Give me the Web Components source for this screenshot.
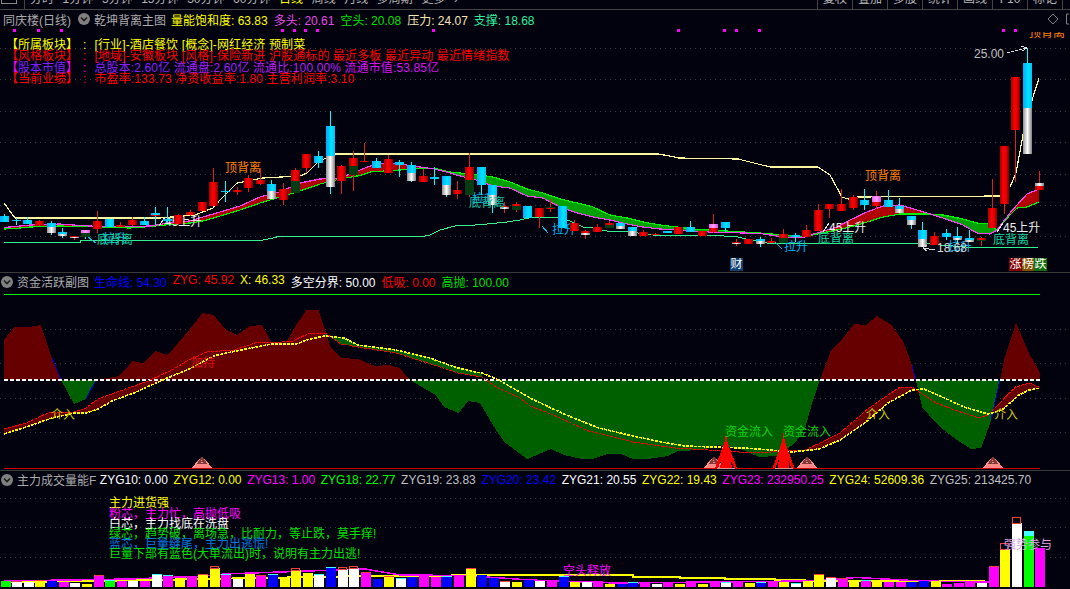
<!DOCTYPE html>
<html lang="zh">
<head>
<meta charset="utf-8">
<title>同庆楼(日线)</title>
<style>
  html, body { margin: 0; height: 100%; background: #02020f; overflow: hidden; }
  body { font: 12px "Liberation Sans", "Noto Sans CJK SC", sans-serif; display: flex; flex-direction: column; }
</style>
</head>
<body>
<top-toolbar></top-toolbar>
<chart-panel h="263" head="18" gap="6" lead="5" pre="同庆楼(日线)" name="乾坤背离主图" items='[["量能饱和度","#ffff00"],["63.83"],["多头","#e84ce8"],["20.61"],["空头","#00e000"],["20.08"],["压力","#f5e6b4"],["24.07"],["支撑","#30f0a0"],["18.68"]]'>
  <k-chart></k-chart>
  <info-rows></info-rows>
  <svg slot="right" width="22" height="12" viewBox="0 0 22 12"><path d="M5 1 L10 6 L5 11 L0 6 Z" fill="none" stroke="#808080"/><path d="M21 1 H18.5 V11 H21" fill="none" stroke="#808080"/></svg>
</chart-panel>
<chart-panel h="198" head="17" gap="6" lead="5" name="资金活跃副图" items='[["生命线","#0000ff"],["54.30"],["ZYG","#ff0000"],["45.92"],["X","#ffff00"],["46.33"],["多空分界","#ffffff"],["50.00"],["低吸","#ff0000"],["0.00"],["高抛","#00e000"],["100.00"]]'>
  <fund-chart></fund-chart>
</chart-panel>
<chart-panel h="118" head="17" gap="5.6" lead="3.5" last name="主力成交量能F" items='[["ZYG10","#ffffff"],["0.00"],["ZYG12","#ffff00"],["0.00"],["ZYG13","#ff00ff"],["1.00"],["ZYG18","#00ff00"],["22.77"],["ZYG19","#c0c0c0"],["23.83"],["ZYG20","#0000ff"],["23.42"],["ZYG21","#ffffff"],["20.55"],["ZYG22","#ffff00"],["19.43"],["ZYG23","#ff00ff"],["232950.25"],["ZYG24","#ffff00"],["52609.36"],["ZYG25","#c0c0c0"],["213425.70"]]'>
  <vol-chart></vol-chart>
</chart-panel>

<script>
const GRID = '#3c3c3c';
const line = (pts, color, w = 1, extra = '') =>
  `<polyline points="${pts.map(p => p.join(',')).join(' ')}" fill="none" stroke="${color}" stroke-width="${w}" ${extra}/>`;
const label = (x, y, str, color, size = 12) =>
  `<text x="${x}" y="${y}" fill="${color}" font-size="${size}">${str}</text>`;
const dots = ys => ys.map(y => `<line x1="0" x2="1070" y1="${y}" y2="${y}" stroke="${GRID}" stroke-dasharray="1 4"/>`).join('');
const poly = (pts, fill) => `<polygon points="${pts.map(p => p.join(',')).join(' ')}" fill="${fill}"/>`;
const rising = (x, y) => line([[x + 6, y - 9], [x, y]], '#f0f0f0') + label(x + 6, y, '45上升', '#f0f0f0');

class TopToolbar extends HTMLElement {
  connectedCallback() {
    const tabs = ['分时', '1分钟', '5分钟', '15分钟', '30分钟', '60分钟', '日线', '周线', '月线', '多周期', '更多', '›'];
    const tools = ['复权', '叠加', '多股', '统计', '画线', 'F10', '标记', ''];
    this.attachShadow({mode: 'open'}).innerHTML = `
      <style>
        :host { display: flex; flex: none; height: 10px; box-sizing: border-box; border-bottom: 1px solid #444; overflow: hidden; color: #b4b4b4; line-height: 12px; }
        .icon { width: 14px; height: 3px; margin: 0 7px 0 1px; border: 1px solid #888; border-top: 0; flex: none; }
        .tabs { display: flex; gap: 8.6px; margin-top: -7px; padding-left: 5px; height: 16px; border-left: 1px solid #444; }
        .tabs .on { color: #ffff00; }
        .tools { display: flex; margin-left: auto; width: 253px; }
        .tools div { width: 35px; flex: none; box-sizing: border-box; border-left: 1px solid #444; text-align: center; }
        .tools span { display: block; margin-top: -7px; }
      </style>
      <div class="icon"></div>
      <div class="tabs">${tabs.map(t => `<span class="${t === '日线' ? 'on' : ''}">${t}</span>`).join('')}</div>
      <div class="tools">${tools.map(t => `<div><span>${t}</span></div>`).join('')}</div>
    `;
  }
}

class ChartPanel extends HTMLElement {
  connectedCallback() {
    const items = JSON.parse(this.getAttribute('items') || '[]');
    const pre = this.getAttribute('pre');
    let pairs = '';
    items.forEach(it => {
      if (it[1]) pairs += `<span style="color:${it[1]}">${it[0]}: `;
      else pairs += `${it[0]}</span>`;
    });
    this.style.height = this.getAttribute('h') + 'px';
    this.attachShadow({mode: 'open'}).innerHTML = `
      <style>
        :host { display: flex; flex: none; flex-direction: column; position: relative; box-sizing: border-box; border-bottom: 1px solid #3a3a3a; }
        :host([last]) { border-bottom: 0; }
        header { display: flex; flex: none; align-items: center; height: ${this.getAttribute('head')}px; padding-left: ${pre ? 3 : 1}px; color: #ababab; white-space: nowrap; }
        .pre { margin-right: 7px; }
        .ic { flex: none; margin-right: 4px; }
        .items { display: flex; gap: ${this.getAttribute('gap')}px; margin-left: ${this.getAttribute('lead')}px; }
        .right { margin-left: auto; display: flex; }
        .body { flex: 1; min-height: 0; }
      </style>
      <header>
        ${pre ? `<span class="pre">${pre}</span>` : ''}
        <svg class="ic" width="12" height="12" viewBox="0 0 12 12"><circle cx="6" cy="6" r="6" fill="#808080"/><path d="M3 4.5 L6 7.5 L9 4.5" fill="none" stroke="#1c1c1c" stroke-width="1.6"/></svg>
        <span>${this.getAttribute('name')}</span>
        <div class="items">${pairs}</div>
        <div class="right"><slot name="right"></slot></div>
      </header>
      <div class="body"><slot></slot></div>
    `;
  }
}

class InfoRows extends HTMLElement {
  connectedCallback() {
    const rows = [
      ['#ffff00', '#ffff00', '<span>[行业]-酒店餐饮 [概念]-网红经济 预制菜</span>', '所属板块', '#ffff00'],
      ['#ff0000', '#ff0000', '<span>[地域]-安徽板块 [风格]-保险新进 沪股通标的 最近多板 最近异动 最近情绪指数</span>', '风格板块', '#ff0000'],
      ['#ff00ff', '#8820ff', '<span style="color:#8820ff">总股本:2.60亿</span> <span style="color:#a020f8">流通盘:2.60亿</span> <span style="color:#b820f0">流通比:100.00%</span> <span style="color:#d810f0">流通市值:53.85亿</span>', '股本市值', '#8020ff'],
      ['#ff0000', '#ff0000', '<span>市盈率:133.73 净资收益率:1.80 主营利润率:3.10</span>', '当前业绩', '#ff0000']
    ];
    this.attachShadow({mode: 'open'}).innerHTML = `
      <style>
        :host { position: absolute; left: 6px; top: 29.5px; display: grid; grid-template-columns: 72px 16.5px auto; grid-auto-rows: 11.5px; line-height: 11.5px; white-space: nowrap; justify-content: start; }
        .c { padding-left: 5px; }
        .v { letter-spacing: .12px; }
      </style>
      ${rows.map(r => `
        <span style="color:${r[0]}">【<span style="color:${r[4]}">${r[3]}</span>】</span>
        <span class="c" style="color:${r[0]}">:</span>
        <span class="v" style="color:${r[1]}">${r[2]}</span>
      `).join('')}
    `;
  }
}

// top, split, bottom, wick top, wick bottom, kind
const CANDLES = [
  [216,0,222,214,222,'c'],[220,0,221,218,225,'c'],[220,0,224,217,224,'cw'],[221,0,225,220,226,'r'],[223,227,233,221,235,'cw'],
  [232,234,236,228,238,'cw'],[236,237,238,236,240,'rw'],[230,233,237,230,239,'pg'],[221,0,229,211,233,'r'],[219,0,227,219,227,'c'],
  [225,0,227,222,227,'r'],[220,0,225,217,226,'r'],[221,0,225,217,225,'c'],[213,215,216,207,225,'cr'],[219,0,221,207,223,'c'],
  [215,0,224,214,225,'r'],[212,0,215,210,216,'r'],[202,0,211,202,211,'r'],[182,0,206,168,206,'r'],[191,0,192,181,202,'c'],
  [190,0,192,187,195,'r'],[178,0,188,175,192,'r'],[180,0,184,168,185,'r'],[184,191,199,180,199,'cw'],[189,0,200,183,205,'r'],
  [170,181,193,168,193,'rg'],[154,0,168,154,173,'r'],[156,0,163,151,168,'c'],[126,156,187,111,194,'cw'],[166,0,181,165,194,'r'],
  [158,166,175,151,191,'rg'],
  [161,0,162,143,162,'r'],[161,168,168,158,168,'cw'],[159,0,173,155,173,'r'],[162,0,165,160,177,'c'],[165,173,181,162,182,'cw'],
  [176,0,182,169,182,'r'],[177,0,179,167,185,'c'],[176,185,195,176,197,'cw'],[190,0,194,181,199,'r'],[167,180,195,153,197,'rg'],
  [167,0,185,167,195,'c'],[185,195,205,185,213,'cw'],[206,207,209,202,213,'rw'],[204,206,210,202,212,'rg'],[206,0,218,206,218,'c'],
  [208,0,217,208,228,'r'],[207,208,209,199,212,'gr'],[206,0,228,206,228,'c'],[223,0,231,220,231,'r'],[231,233,235,230,239,'rw'],
  [227,0,232,224,232,'r'],[223,225,228,221,228,'rg'],[223,226,229,223,229,'cw'],[227,231,236,227,236,'cw'],[232,0,236,230,236,'r'],
  [234,0,235,233,235,'r'],[231,0,233,231,233,'c'],[227,0,234,227,234,'r'],[227,0,232,221,232,'c'],[231,0,236,231,236,'r'],
  [224,228,232,214,233,'pr'],[222,0,228,222,232,'c'],[242,243,244,239,246,'rw'],[239,0,244,239,244,'r'],[239,241,244,237,247,'cw'],
  [241,0,243,238,243,'r'],[234,238,243,229,243,'rg'],[235,0,237,233,242,'c'],[230,0,237,225,237,'r'],[210,0,231,204,231,'r'],
  [204,0,209,204,218,'r'],[204,0,211,189,211,'r'],[197,0,208,195,210,'r'],[200,0,205,189,210,'c'],[196,202,206,191,209,'pr'],
  [200,0,207,190,207,'c'],[206,209,213,198,213,'cw'],[216,220,225,216,229,'cw'],[230,239,247,222,247,'cw'],[236,0,245,232,245,'r'],
  [233,0,237,229,240,'c'],[236,238,240,227,244,'cw'],[238,240,242,230,242,'cw'],[238,240,241,237,246,'rg'],[208,0,228,179,228,'r'],
  [146,0,204,146,214,'r'],[77,0,130,77,182,'r'],[63,108,154,48,154,'cw'],[183,186,190,171,190,'wr']
];
const cx = i => 4.5 + 11.625 * i;

// band top (magenta) and band bottom (green) lines
const BAND = [[4,227.5,229],[15,226.5,228.5],[30,225,227],[60,224,226],[80,225.5,226.6],[100,226.5,227],[130,226.5,228],[150,226,226.5],[175,222,224],[190,221,223],[203,217,221],[220,212,216],[240,206,210],[260,197,203],[280,192,197],[300,183,191],[320,179,184],[340,178,179],[360,170,175.5],[370,166,172],[385,163,171],[400,164,170],[420,167,168],[435,169,168.5],[450,173,172],[460,176,173],[480,181,175],[493,186,177],[510,188,182],[527,196,189],[543,198,193],[560,207,199],[577,213,203],[593,217,207],[610,220,215],[627,224,218],[643,227,222],[660,229,225],[677,230,227],[693,231,229],[710,232,230],[743,233,232],[760,233.5,233],[783,237,235],[803,237.5,237],[817,233,234],[837,227,230],[850,220,227],[867,212,222],[883,206,217],[900,205,214],[917,210,214],[927,213,214],[943,218,215],[963,225,219],[977,233,223],[990,234,224],[997,230,230],[1010,213,215],[1017,205,208],[1027,194,207],[1039,189,202]];

class KChart extends HTMLElement {
  candle(c, i) {
    const [top, split, bot, wt, wb, k] = c;
    const x = Math.round(cx(i) - 4.5);
    const mid = x + 4;
    const fills = { r: 'url(#r)', c: 'url(#c)', w: 'url(#w)', g: '#063c12', p: 'url(#p)' };
    const wick = (k[0] === 'c' || (k[0] === 'p' && k[1] === 'g')) ? '#00ffff' : '#e02020';
    let out = `<rect x="${mid}" y="${wt}" width="1" height="${wb - wt}" fill="${wick}"/>`;
    if (split) {
      out += `<rect x="${x}" y="${top}" width="9" height="${split - top}" fill="${fills[k[0]]}"/>`;
      out += `<rect x="${x}" y="${split}" width="9" height="${bot - split}" fill="${fills[k[1]]}"/>`;
    } else {
      out += `<rect x="${x}" y="${top}" width="9" height="${bot - top}" fill="${fills[k[0]]}"/>`;
    }
    return out;
  }
  band() {
    let out = '';
    for (let i = 0; i < BAND.length - 1; i++) {
      const [x1, m1, g1] = BAND[i], [x2, m2, g2] = BAND[i + 1];
      const up = (m1 + m2) <= (g1 + g2);
      out += poly([[x1, m1], [x2, m2], [x2, g2], [x1, g1]], up ? '#b00000' : '#00a000');
    }
    out += line(BAND.map(b => [b[0], b[2]]), '#00f000', 1.2);
    out += line(BAND.map(b => [b[0], b[1]]), '#f040f0', 1.2);
    return out;
  }
  connectedCallback() {
    const yellow = [[4,203],[15,218],[160,218],[195,215],[213,208],[220,200],[237,183],[263,178],[300,176],[307,173],[317,163],[333,154],[658,154],[670,156],[678,158],[738,159],[770,167],[818,167],[830,175],[842,197],[848,199],[858,197],[1000,196]];
    const yellow2 = [[1010,187],[1016,173],[1023,135],[1033,97],[1039,78]];
    const support = [[4,242],[80,242],[80,241],[97,240],[263,240],[273,238],[280,236],[425,236],[430,235],[440,230],[455,226],[475,225],[487,224],[507,222],[520,220],[533,217],[557,217],[570,221],[583,227],[593,228],[607,231],[627,231],[643,234],[653,235],[710,235],[738,237],[750,240],[767,243],[923,243],[940,245],[966,247],[1038,247]];
    const marks = [14, 38, 61, 282, 294, 305, 317, 433, 678, 724, 736, 759, 1003, 1015];
    const CH = 28;
    this.attachShadow({mode: 'open'}).innerHTML = `
      <style>
        :host { display: block; height: 100%; }
        svg { display: block; width: 100%; height: 100%; shape-rendering: crispEdges; font-family: "Liberation Sans", "Noto Sans CJK SC", sans-serif; }
      </style>
      <svg viewBox="0 ${CH} 1070 244" preserveAspectRatio="none">
        <defs>
          <linearGradient id="r"><stop offset="0" stop-color="#a80000"/><stop offset=".4" stop-color="#ff0000"/><stop offset=".7" stop-color="#e00000"/><stop offset="1" stop-color="#800000"/></linearGradient>
          <linearGradient id="c"><stop offset="0" stop-color="#00a8ff"/><stop offset=".6" stop-color="#00e4ff"/><stop offset="1" stop-color="#00c0ff"/></linearGradient>
          <linearGradient id="w"><stop offset="0" stop-color="#909090"/><stop offset=".5" stop-color="#ffffff"/><stop offset="1" stop-color="#808080"/></linearGradient>
          <linearGradient id="p"><stop offset="0" stop-color="#f060f0"/><stop offset=".5" stop-color="#ffa0ff"/><stop offset="1" stop-color="#e050e0"/></linearGradient>
        </defs>
        ${dots([48, 79, 111, 142, 174, 205, 236])}
        ${label(1029, 37, '顶背离', '#ff8000')}
        <rect x="1020" y="${CH}" width="50" height="4" fill="#02020f"/>
        ${marks.map(x => `<rect x="${x - 1}" y="29" width="3" height="3" fill="#ff00ff"/>`).join('')}
        ${line(support, '#30f090')}
        ${this.band()}
        ${rising(159, 226)}
        ${line(yellow, '#fdf8a0', 1.2)}
        ${line(yellow2, '#fdf8a0', 1.2)}
        ${label(103, 243, '拉升', '#00b8f0')}
        ${label(472, 203, '拉升', '#00b8f0')}
        ${rising(823, 232)}
        ${rising(997, 232)}
        ${label(552, 234, '拉升', '#00b8f0')}
        ${label(784, 251, '拉升', '#00b8f0')}
        ${label(948, 251, '拉升', '#00b8f0')}
        ${CANDLES.map((c, i) => this.candle(c, i)).join('')}
        ${label(225, 172, '顶背离', '#ff8000')}
        ${label(865, 180, '顶背离', '#ff8000')}
        ${label(97, 244, '底背离', '#10d8a0')}
        ${label(469, 207, '底背离', '#10c8a8')}
        ${label(818, 243, '底背离', '#10d8a0')}
        ${label(993, 244, '底背离', '#10d8a0')}
        ${line([[88,237],[96,243]], '#00c0e0')}
        ${line([[542,226],[548,233]], '#00c0e0')}
        ${line([[775,242],[782,249]], '#00c0e0')}
        ${line([[923,248],[935,250]], '#d8d8d8')}
        ${line([[927,245],[923,248],[927,251]], '#d8d8d8')}
        ${label(937, 252, '18.68', '#d8d8d8')}
        ${label(974, 58, '25.00', '#c0c0c0')}
        ${line([[1007,53],[1027,48]], '#e0e0e0', 1, 'stroke-dasharray="3 1"')}
        ${line([[1021,46],[1027,48],[1022,51]], '#e0e0e0')}
      </svg>
      <tag-badge style="left:730px;top:248px;background:#104070">财</tag-badge>
      <tag-badge style="left:1009px;top:248px;background:#800000">涨</tag-badge>
      <tag-badge style="left:1021.5px;top:248px;background:#804f00">榜</tag-badge>
      <tag-badge style="left:1034px;top:248px;background:#107010">跌</tag-badge>
    `;
  }
}

class TagBadge extends HTMLElement {
  connectedCallback() {
    this.attachShadow({mode: 'open'}).innerHTML = `
      <style>:host { position: absolute; width: 13px; height: 13px; line-height: 13px; color: #fff; text-align: center; overflow: hidden; }</style>
      <slot></slot>
    `;
  }
}

class FundChart extends HTMLElement {
  connectedCallback() {
    const area = [[4,380],[4,340],[14,327],[29,327],[41,325],[52,358],[61,380],[74,404],[86,399],[96.4,380],[119,376],[132.6,361],[143,363],[155,351],[168,355],[189,330],[202.5,313],[213.5,315],[225.5,329],[237,335],[250,326],[262,325],[272,343],[286,343],[296,325],[306.5,310],[318.5,310],[330.6,347],[341,358],[358,359],[375,366],[389,365],[399.5,368],[410,380],[435.6,395],[444,407],[458.7,413],[468,401],[480,403],[496,430],[504.5,442],[527,459],[530,458],[551,449],[564,455],[582,459],[592,459],[607.5,454],[621,454],[633,459],[647,459],[668,456],[678,451],[702,450],[719,445],[743.5,450],[759,457],[778,456],[795,443],[805.5,427],[812,403],[820,380],[831,350],[843,338],[854,324],[866,325],[877,316],[891.6,325],[903.6,342],[912,365],[915.7,380],[922.6,408],[940,427],[957,440],[971,449],[981,448],[991.4,420],[1000,380],[1004.5,358],[1016,323],[1029,353],[1039.6,372],[1039.6,380]];
    const yel = [[4,434],[26,427],[52,418],[74,413],[86,413],[98,409],[114,400],[134,393],[151.5,385],[165,379],[189,369],[213.5,356],[231,352],[251,348],[272,344],[296,344],[310,339],[325,336],[344,338],[358,345],[396,350],[430,358],[454.5,367],[475,372],[482,373],[499,380],[530,398],[551,408],[571,417],[599,428],[633,436],[661,442],[685,446],[712.5,447],[743.5,448],[771,450],[792,452],[819,449],[840,440],[866,422],[888,403],[912,390],[924,389],[940,396],[964,407],[988,414],[1002,410],[1019,395],[1029,390],[1039.6,388]];
    const red = [[4,429],[26,423],[48,413],[74,412],[86,408],[98,399],[117,392],[148,381],[172,370],[189,360],[206.6,352],[234,350],[258,342],[272,343],[293,341],[310,333],[325,333],[341,344],[358,347],[396,353],[434,365],[458,373],[482,377],[496,387],[520,398],[530,406],[551,414],[588.5,431],[633,442],[675,448],[709,450],[754,453],[805.5,450],[840,433],[869,408],[900,387],[912,387],[936,403],[960.5,412],[979,418],[988,415],[1015.5,387],[1029,383],[1039.6,387]];

    // split the histogram into one polygon per side of the 380 axis
    let shapes = '', cur = [];
    area.forEach(p => {
      cur.push(p);
      if (p[1] === 380 && cur.length > 1) {
        const up = cur.some(q => q[1] < 380);
        shapes += poly(cur, up ? '#660000' : '#006000');
        cur = [p];
      }
    });

    const between = (a, b, fill) => poly([...red.filter(p => p[0] >= a && p[0] <= b), ...yel.filter(p => p[0] >= a && p[0] <= b).reverse()], fill);
    const pyramid = x => poly([[x,456],[x + 10.5,468],[x - 10.5,468]], '#ff8a8a') +
      [0, 1, 2].map(k => `<path d="M${x} ${457 + k * 2} L${x + 4 - k} ${463} H${x - 4 + k} Z" fill="none" stroke="#803838"/>`).join('');
    const spike = x => poly([[x,433],[x + 6,468],[x - 6,468]], '#ff0000') +
      poly([[x,438],[x + 11,468],[x + 8,468],[x,448],[x - 8,468],[x - 11,468]], '#ff0000') +
      `<rect x="${x - 9}" y="468" width="18" height="1" fill="#e09090"/>`;

    this.attachShadow({mode: 'open'}).innerHTML = `
      <style>
        :host { display: block; height: 100%; }
        svg { display: block; width: 100%; height: 100%; shape-rendering: crispEdges; font-family: "Liberation Sans", "Noto Sans CJK SC", sans-serif; }
      </style>
      <svg viewBox="0 290 1070 180" preserveAspectRatio="none">
        ${dots([329, 363, 398, 432])}
        ${shapes}
        ${between(4, 325, '#660000')}
        ${between(325, 482, '#006000')}
        ${between(792, 912, '#660000')}
        ${between(988, 1040, '#660000')}
        ${line([[52,358],[61,380]], '#0000c0')}${line([[86,399],[96,380]], '#0000c0')}${line([[912,365],[916,380]], '#0000c0')}${line([[991,420],[1000,380]], '#0000c0')}
        <rect x="4" y="294" width="1036" height="1" fill="#00f000"/>
        <line x1="4" x2="1040" y1="380" y2="380" stroke="#ffffff" stroke-width="1.6" stroke-dasharray="4 2"/>
        ${line(red, '#ff0000', 1, 'stroke-dasharray="3 1"')}
        ${line(yel, '#ffff00', 1.6, 'stroke-dasharray="3 1"')}
        <rect x="4" y="468" width="1036" height="1" fill="#d00000"/>
        ${pyramid(202)}${pyramid(714)}${pyramid(807)}${pyramid(993)}
        ${spike(726)}${spike(783.5)}
        ${label(51, 419, '介入', '#c8c800')}
        ${label(191, 367, '加持', '#d81010')}
        ${label(866, 419, '介入', '#c8c800')}
        ${label(994, 419, '介入', '#c8c800')}
        ${label(725, 436, '资金流入', '#10d010')}
        ${label(783, 436, '资金流入', '#10d010')}
      </svg>
    `;
  }
}

class VolChart extends HTMLElement {
  connectedCallback() {
    const M = '#ff00ff', Y = '#ffff00', W = '#ffffff', B = '#0000ff', G = '#00ff00';
    // colour, top in zoomed rows, cap: r red outline, c cyan
    const bars = [[G,340],[W,342,'r'],[W,342],[Y,340,'r'],[B,340],[M,342],[W,345],[Y,347],[M,323,'r'],[G,338,'c'],[M,338],[W,340],[M,338],[W,320,'c'],[M,325,'c'],[Y,330],[M,325],[Y,322,'r'],[Y,300,'R'],[M,322,'c'],[W,333],[Y,318],[M,325,'r'],[B,322,'c'],[Y,328],[Y,306,'R'],[Y,315],[W,320,'c'],[B,300,'c'],[W,303,'R'],[W,300,'R'],[M,316,'r'],[B,333],[Y,328,'r'],[W,332,'c'],[B,328],[M,325],[M,326],[B,326,'c'],[M,322],[Y,303,'r'],[B,320],[B,330],[W,342,'r'],[Y,342],[B,336],
      [W,340],[M,338],[B,328,'c'],[Y,342],[W,342],[M,338],[Y,348],[B,348],[B,345,'c'],[M,345],[W,348],[M,345],[Y,348],[M,346],[Y,348],[M,342],[W,344,'c'],[M,340],[Y,345],[B,345,'c'],[M,340],[Y,342],[W,347,'c'],[Y,340],[Y,320,'r'],[W,330,'r'],[M,333,'r'],[Y,338],[M,338,'c'],[Y,338],[M,342],[M,342],[B,342],[B,340],[Y,340],[M,347],[M,345],[M,342],[W,345],[M,298,'r'],[Y,243,'R'],[W,165,'R'],[G,205,'C'],[M,240]];
    const yLine = [[4,582],[92,581],[372,576],[530,575],[633,575],[633,577],[680,577],[680,578],[725,578],[725,579],[775,579],[775,580],[805,580],[805,581],[985,581]];
    const mLine = [[4,581],[130,579],[205,576],[224,574],[365,569],[400,575],[465,575.5],[530,580],[616,583],[805,581],[857,577.5],[922,581],[990,582]];
    const bar = (b, i) => {
      const x = Math.round(0.5 + 11.625 * i);
      const top = 468 + b[1] / 3;
      let s = `<rect x="${x}" y="${top}" width="10" height="${587 - top}" fill="${b[0]}"/>`;
      if (b[2] === 'r') s += `<rect x="${x}" y="${top - 1}" width="10" height="1" fill="#f04040"/>`;
      if (b[2] === 'c') s += `<rect x="${x}" y="${top - 1}" width="10" height="1" fill="#40ffff"/>`;
      if (b[2] === 'C') s += `<rect x="${x}" y="${top - 5}" width="10" height="5" fill="#40ffff"/>`;
      if (b[2] === 'R') {
        const h = b[1] < 250 ? 6 : 2;
        s += `<rect x="${x + .5}" y="${top - h + .5}" width="8" height="${h}" fill="none" stroke="#f04040"/>`;
      }
      return s;
    };
    const notes = [
      ['主力进货强', '#ffff00'],
      ['粉芯，主力忙，高抛低吸', '#ff00ff'],
      ['白芯，主力找底在洗盘', '#ffffff'],
      ['绿芯，趋势破，离场急，比耐力，等止跌，莫手痒!', '#00e000'],
      ['蓝芯，巨量缝尾，主力出逃慌!', '#0078e0'],
      ['巨量下部有蓝色(大单流出)时，说明有主力出逃!', '#00e000']
    ];
    const noteY = [507, 518, 528, 538, 548, 558];
    this.attachShadow({mode: 'open'}).innerHTML = `
      <style>
        :host { display: block; height: 100%; }
        svg { display: block; width: 100%; height: 100%; shape-rendering: crispEdges; font-family: "Liberation Sans", "Noto Sans CJK SC", sans-serif; }
      </style>
      <svg viewBox="0 488 1070 101" preserveAspectRatio="none">
        ${dots([498, 527, 557])}
        ${line(yLine, '#ffff00', 2)}
        ${line(mLine, '#ff00ff', 1.5)}
        ${bars.map(bar).join('')}
        ${notes.map((n, i) => label(109, noteY[i], n[0], n[1])).join('')}
        ${label(563, 575, '空头释放', '#ff00ff')}
        ${label(1004, 549, '强势参与', '#d8a8e8')}
      </svg>
    `;
  }
}

customElements.define('top-toolbar', TopToolbar);
customElements.define('tag-badge', TagBadge);
customElements.define('chart-panel', ChartPanel);
customElements.define('info-rows', InfoRows);
customElements.define('k-chart', KChart);
customElements.define('fund-chart', FundChart);
customElements.define('vol-chart', VolChart);
</script>
</body>
</html>
